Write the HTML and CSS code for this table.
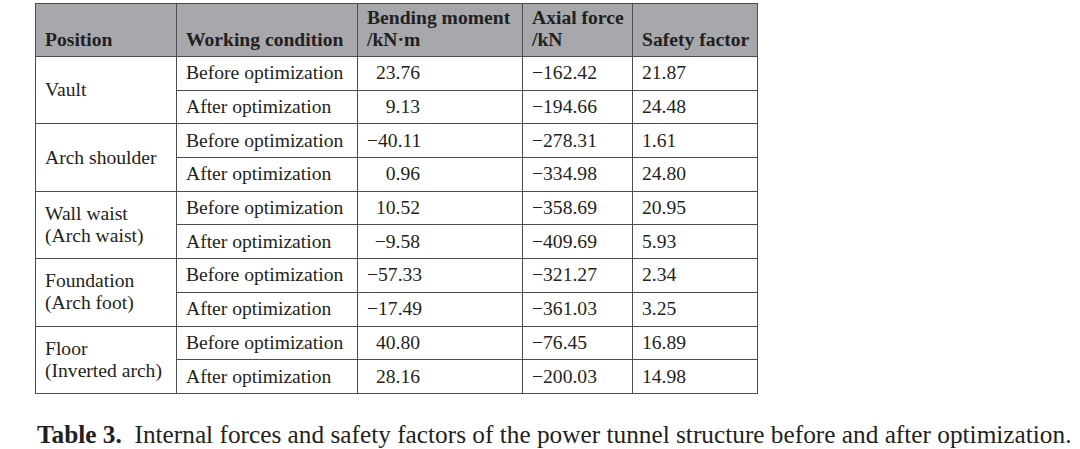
FILE: index.html
```html
<!DOCTYPE html>
<html>
<head>
<meta charset="utf-8">
<link rel="stylesheet" href="styles.css">
</head>
<body>
<div class="page">
<table class="data">
<colgroup>
<col class="c1"><col class="c2"><col class="c3"><col class="c4"><col class="c5">
</colgroup>
<thead>
<tr>
<th>Position</th>
<th>Working condition</th>
<th>Bending moment<br>/kN·m</th>
<th>Axial force<br>/kN</th>
<th>Safety factor</th>
</tr>
</thead>
<tbody>
<tr><td class="pos" rowspan="2">Vault</td><td>Before optimization</td><td class="num">23.76</td><td>−162.42</td><td>21.87</td></tr>
<tr><td>After optimization</td><td class="num">9.13</td><td>−194.66</td><td>24.48</td></tr>
<tr><td class="pos" rowspan="2">Arch shoulder</td><td>Before optimization</td><td class="num">−40.11</td><td>−278.31</td><td>1.61</td></tr>
<tr><td>After optimization</td><td class="num">0.96</td><td>−334.98</td><td>24.80</td></tr>
<tr><td class="pos" rowspan="2">Wall waist<br>(Arch waist)</td><td>Before optimization</td><td class="num">10.52</td><td>−358.69</td><td>20.95</td></tr>
<tr><td>After optimization</td><td class="num">−9.58</td><td>−409.69</td><td>5.93</td></tr>
<tr><td class="pos" rowspan="2">Foundation<br>(Arch foot)</td><td>Before optimization</td><td class="num">−57.33</td><td>−321.27</td><td>2.34</td></tr>
<tr><td>After optimization</td><td class="num">−17.49</td><td>−361.03</td><td>3.25</td></tr>
<tr><td class="pos" rowspan="2">Floor<br>(Inverted arch)</td><td>Before optimization</td><td class="num">40.80</td><td>−76.45</td><td>16.89</td></tr>
<tr><td>After optimization</td><td class="num">28.16</td><td>−200.03</td><td>14.98</td></tr>
</tbody>
</table>
<p class="caption"><b>Table 3.</b>&nbsp; Internal forces and safety factors of the power tunnel structure before and after optimization.</p>
</div>
</body>
</html>
```
FILE: styles.css
```css
html, body {
  margin: 0;
  padding: 0;
  background: #ffffff;
}
.page {
  padding: 3px 0 0 35px;
  font-family: "Liberation Serif", "Times New Roman", serif;
  color: #231f20;
}
.data {
  border-collapse: collapse;
  table-layout: fixed;
  width: 722px;
  font-size: 19.6px;
}
.c1 { width: 141px; }
.c2 { width: 181px; }
.c3 { width: 165px; }
.c4 { width: 110px; }
.c5 { width: 125px; }
.data th, .data td {
  border: 1px solid #4d4d4f;
  padding: 0 0 0 9px;
  text-align: left;
  white-space: nowrap;
}
.data th {
  background: #a7a8ab;
  height: 47px;
  vertical-align: bottom;
  line-height: 22px;
  padding-bottom: 5px;
  font-weight: bold;
}
.data td {
  height: 32.7px;
  line-height: 22px;
  vertical-align: middle;
}
.data td.num {
  text-align: right;
  padding-right: 102px;
}
.caption {
  margin: 25px 0 0 2px;
  font-size: 25.3px;
  line-height: 30px;
  white-space: nowrap;
}
```
